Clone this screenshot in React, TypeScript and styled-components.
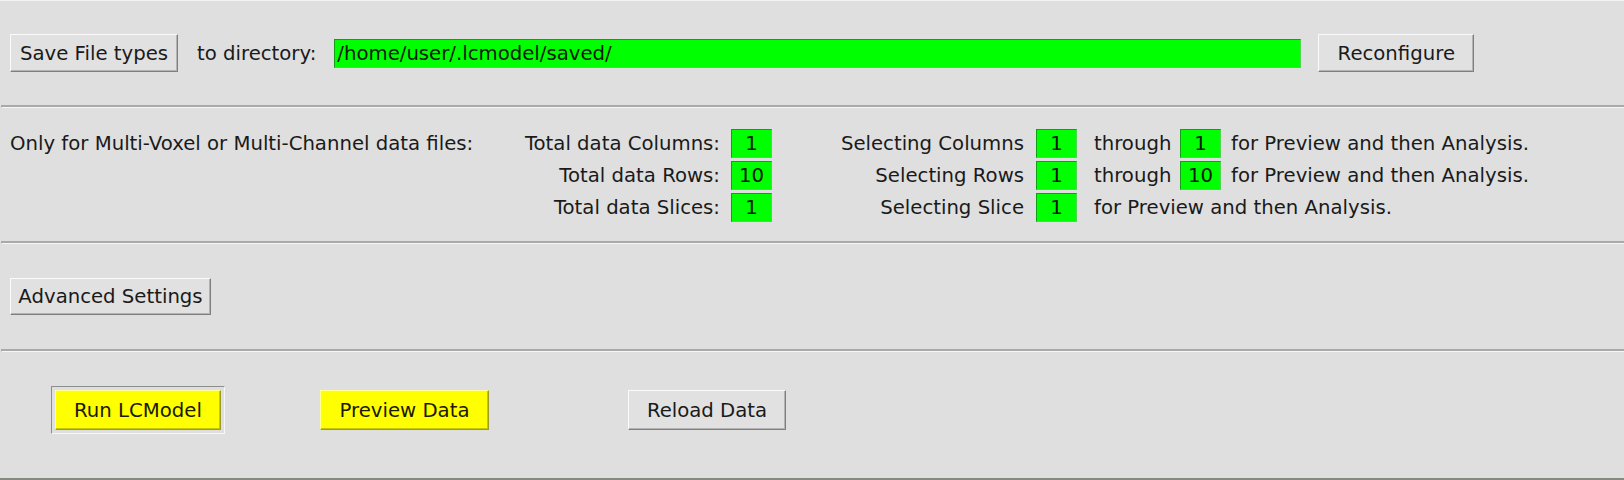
import React from "react";
import styled, { createGlobalStyle, css } from "styled-components";

const Global = createGlobalStyle`
  html, body { margin: 0; padding: 0; background: #dfdfdf; }
  body { font-family: "DejaVu Sans", "Liberation Sans", sans-serif; font-size: 19.7px; color: #111; }
  * { box-sizing: border-box; }
`;

const Window = styled.div`
  width: 1624px;
  height: 480px;
  background: #dfdfdf;
  border-top: 1px solid #f4f4f4;
  border-bottom: 2px solid #858a7e;
  display: flex;
  flex-direction: column;
  overflow: hidden;
`;

const Section = styled.div<{ $h: number; $pt?: number; $pl?: number; $center?: boolean }>`
  height: ${(p) => p.$h}px;
  flex: none;
  display: flex;
  ${(p) => (p.$center ? "align-items: center;" : "align-items: flex-start;")}
  padding-top: ${(p) => p.$pt ?? 0}px;
  padding-left: ${(p) => p.$pl ?? 10}px;
`;

const ButtonRow = styled.div`
  display: flex;
  align-items: center;
`;

const Groove = styled.div`
  height: 3px;
  flex: none;
  margin-left: 1px;
  border-top: 2px solid #a9a9a9;
  border-bottom: 1px solid #f6f6f6;
  border-left: 1px solid #a9a9a9;
`;

const Button = styled.div<{ $w: number; $h: number; $tone?: "gray" | "yellow"; $ml?: number }>`
  width: ${(p) => p.$w}px;
  height: ${(p) => p.$h}px;
  margin-left: ${(p) => p.$ml ?? 0}px;
  flex: none;
  display: flex;
  align-items: center;
  justify-content: center;
  white-space: nowrap;
  border: 1px solid;
  ${(p) =>
    p.$tone === "yellow"
      ? css`
          background: #ffff00;
          border-color: #ffff9a #9c9c2a #9c9c2a #ffff9a;
          box-shadow: inset -1px -1px 0 #c8c800;
          color: #1a1a00;
        `
      : css`
          background: #e1e1e1;
          border-color: #fbfbfb #7f7f7f #7f7f7f #fbfbfb;
          box-shadow: inset -1px -1px 0 #b3b3b3;
          color: #1a1a1a;
        `}
`;

const DefaultRing = styled.div<{ $ml?: number }>`
  margin-left: ${(p) => p.$ml ?? 0}px;
  flex: none;
  padding: 3px;
  border: 1px solid;
  border-color: #8d8d8d #f7f7f7 #f7f7f7 #8d8d8d;
  display: flex;
`;

const Label = styled.span<{ $ml?: number }>`
  margin-left: ${(p) => p.$ml ?? 0}px;
  white-space: nowrap;
  color: #1a1a1a;
`;

const Entry = styled.div<{ $w: number; $ml?: number }>`
  width: ${(p) => p.$w}px;
  height: 29px;
  margin-left: ${(p) => p.$ml ?? 0}px;
  flex: none;
  background: #00ff00;
  border: 1px solid;
  border-color: #169c16 #4cd84c #4cd84c #169c16;
  display: flex;
  align-items: center;
  padding-left: 2px;
  color: #0a1a0a;
  white-space: nowrap;
`;

const Grid = styled.div`
  display: grid;
  grid-template-columns: 500px 221px 41px 264px 41px 103px 41px auto;
  grid-auto-rows: 29px;
  row-gap: 3px;
  align-items: center;
`;

const Cell = styled.div<{ $align?: "left" | "right"; $pl?: number; $pr?: number; $col?: string }>`
  text-align: ${(p) => p.$align ?? "left"};
  padding-left: ${(p) => p.$pl ?? 0}px;
  padding-right: ${(p) => p.$pr ?? 0}px;
  white-space: nowrap;
  color: #1a1a1a;
  ${(p) => (p.$col ? `grid-column: ${p.$col};` : "")}
`;

const NumBox = styled.div`
  height: 29px;
  background: #00ff00;
  border: 1px solid;
  border-color: #169c16 #4cd84c #4cd84c #169c16;
  display: flex;
  align-items: center;
  justify-content: center;
  color: #0a1a0a;
`;

const FOR = "for Preview and then Analysis.";

export default function App() {
  return (
    <>
      <Global />
      <Window>
        <Section $h={104} $center>
          <Button $w={168} $h={38}>Save File types</Button>
          <Label $ml={19}>to directory:</Label>
          <Entry $w={967} $ml={18}>/home/user/.lcmodel/saved/</Entry>
          <Button $w={156} $h={38} $ml={17}>Reconfigure</Button>
        </Section>
        <Groove />
        <Section $h={133} $pt={21}>
          <Grid>
            <Cell>Only for Multi-Voxel or Multi-Channel data files:</Cell>
            <Cell $align="right" $pr={11}>Total data Columns:</Cell>
            <NumBox>1</NumBox>
            <Cell $align="right" $pr={12}>Selecting Columns</Cell>
            <NumBox>1</NumBox>
            <Cell $pl={17}>through</Cell>
            <NumBox>1</NumBox>
            <Cell $pl={10}>{FOR}</Cell>

            <Cell />
            <Cell $align="right" $pr={11}>Total data Rows:</Cell>
            <NumBox>10</NumBox>
            <Cell $align="right" $pr={12}>Selecting Rows</Cell>
            <NumBox>1</NumBox>
            <Cell $pl={17}>through</Cell>
            <NumBox>10</NumBox>
            <Cell $pl={10}>{FOR}</Cell>

            <Cell />
            <Cell $align="right" $pr={11}>Total data Slices:</Cell>
            <NumBox>1</NumBox>
            <Cell $align="right" $pr={12}>Selecting Slice</Cell>
            <NumBox>1</NumBox>
            <Cell $pl={17} $col="6 / -1">{FOR}</Cell>
          </Grid>
        </Section>
        <Groove />
        <Section $h={105} $center>
          <Button $w={201} $h={37}>Advanced Settings</Button>
        </Section>
        <Groove />
        <Section $h={123} $pt={34} $pl={51}>
          <ButtonRow>
            <DefaultRing>
              <Button $w={166} $h={40} $tone="yellow">Run LCModel</Button>
            </DefaultRing>
            <Button $w={169} $h={40} $tone="yellow" $ml={95}>Preview Data</Button>
            <Button $w={158} $h={40} $ml={139}>Reload Data</Button>
          </ButtonRow>
        </Section>
      </Window>
    </>
  );
}
